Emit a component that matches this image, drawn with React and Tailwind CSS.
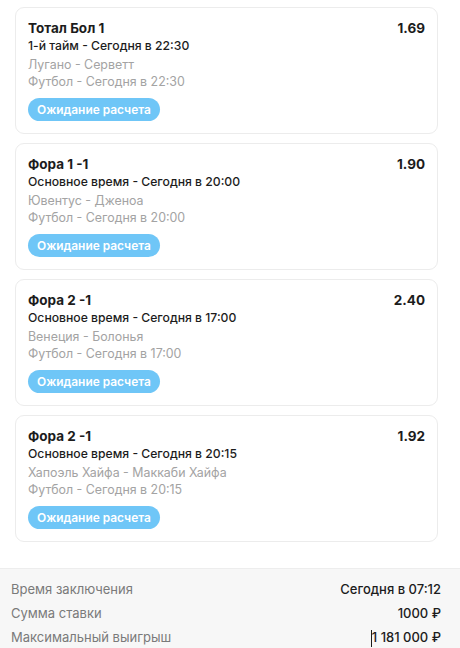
import React from "react";

const bets = [
  {
    title: "Тотал Бол 1",
    odds: "1.69",
    period: "1-й тайм - Сегодня в 22:30",
    teams: "Лугано - Серветт",
    sport: "Футбол - Сегодня в 22:30",
  },
  {
    title: "Фора 1 -1",
    odds: "1.90",
    period: "Основное время - Сегодня в 20:00",
    teams: "Ювентус - Дженоа",
    sport: "Футбол - Сегодня в 20:00",
  },
  {
    title: "Фора 2 -1",
    odds: "2.40",
    period: "Основное время - Сегодня в 17:00",
    teams: "Венеция - Болонья",
    sport: "Футбол - Сегодня в 17:00",
  },
  {
    title: "Фора 2 -1",
    odds: "1.92",
    period: "Основное время - Сегодня в 20:15",
    teams: "Хапоэль Хайфа - Маккаби Хайфа",
    sport: "Футбол - Сегодня в 20:15",
  },
];

const BetCard = ({ bet }) => (
  <div className="bg-white rounded-[9px] border border-[#ececec] pt-3 pb-3 pl-[12px] pr-[12px]">
    <div className="flex justify-between items-start">
      <div>
        <div className="text-[13.5px] leading-[17px] font-bold text-[#1c1c1c]">
          {bet.title}
        </div>
        <div className="text-[12.2px] leading-[17px] font-medium text-[#1c1c1c]">
          {bet.period}
        </div>
      </div>
      <div className="text-[13.5px] leading-[17px] font-bold text-[#1c1c1c]">
        {bet.odds}
      </div>
    </div>
    <div className="mt-[2px] text-[12.4px] leading-[17px] text-[#a3a3a3]">
      {bet.teams}
    </div>
    <div className="text-[12.4px] leading-[17px] text-[#a3a3a3]">{bet.sport}</div>
    <div className="mt-[8px] flex">
      <span className="flex items-center h-[23px] px-[9px] rounded-full bg-[#6fc6f7] text-white text-[11.9px] font-semibold">
        Ожидание расчета
      </span>
    </div>
  </div>
);

const Row = ({ label, value, caret }) => (
  <div className="flex justify-between items-center h-[24px]">
    <span className="text-[13px] text-[#7a7a7a]">{label}</span>
    <span className="text-[13px] font-medium text-[#1c1c1c] flex items-center">
      {caret && <span className="inline-block w-px h-[17px] bg-[#1c1c1c]" />}
      {value}
    </span>
  </div>
);

export default function App() {
  return (
    <div
      className="w-[460px] h-[648px] overflow-hidden bg-white flex flex-col"
      style={{ fontFamily: "Inter, 'Noto Sans', sans-serif" }}
    >
      <div className="flex flex-col gap-[9px] pt-[7px] pl-[15px] pr-[22px]">
        {bets.map((b, i) => (
          <BetCard key={i} bet={b} />
        ))}
      </div>
      <div className="mt-[26px] flex-1 bg-[#f7f7f7] border-t border-[#ededed] pt-[9px] pl-[11px] pr-[19px]">
        <Row label="Время заключения" value="Сегодня в 07:12" />
        <Row label="Сумма ставки" value="1000 ₽" />
        <Row label="Максимальный выигрыш" value="1 181 000 ₽" caret />
      </div>
    </div>
  );
}
